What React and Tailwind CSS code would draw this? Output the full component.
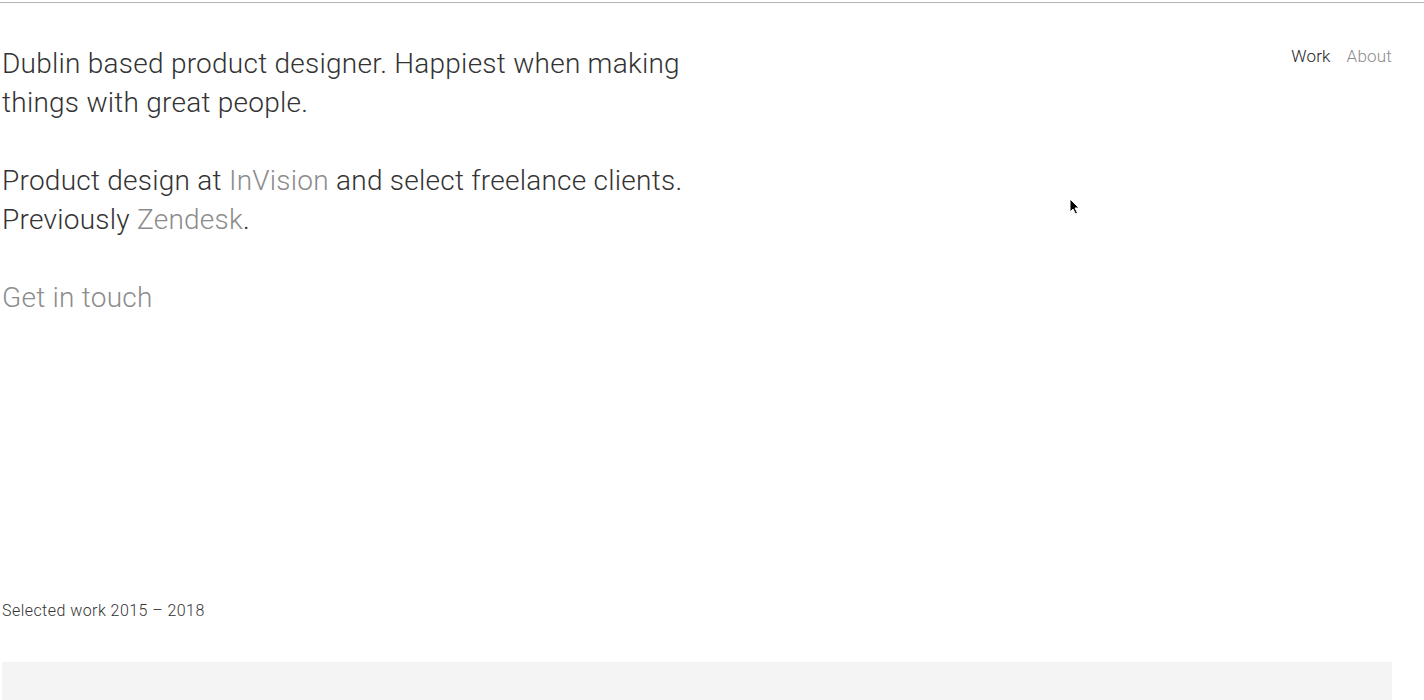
export default function App() {
  return (
    <div className="relative min-h-screen bg-white text-[#333] font-['Roboto','Liberation_Sans',sans-serif]">
      <div className="h-[2px]" />
      <div className="h-px bg-[#b5b5b5]" />
      <div className="flex justify-between pl-[2px] pr-8">
        <div className="pt-[41px] w-[720px] text-[28px] leading-[39px] font-light tracking-[0.25px]">
          <p>Dublin based product designer. Happiest when making<br />things with great people.</p>
          <p className="mt-[39px]">
            Product design at <a className="text-[#8c8c8c]">InVision</a> and select freelance clients.
            <br />
            Previously <a className="text-[#8c8c8c]">Zendesk</a>.
          </p>
          <p className="mt-[39px] text-[#8c8c8c]">Get in touch</p>
        </div>
        <nav className="flex gap-4 pt-[41px] text-[17px] leading-6 font-light tracking-[0.2px]">
          <a className="text-[#222]">Work</a>
          <a className="text-[#8c8c8c]">About</a>
        </nav>
      </div>
      <div className="pl-[2px] pr-8">
        <p className="mt-[284px] text-[16px] leading-5 font-light tracking-[0.45px] text-[#333]">Selected work 2015 – 2018</p>
        <div className="mt-[41px] h-[300px] bg-[#f4f4f4]" />
      </div>
      {/* mouse pointer from the screenshot */}
      <svg className="absolute left-[1069px] top-[198px]" width="11" height="17" viewBox="0 0 11 17">
        <path d="M1 1 L1 14 L4 11 L6.5 16 L8.5 15 L6 10 L10 10 Z" fill="#000" stroke="#fff" strokeWidth="1" />
      </svg>
    </div>
  );
}
